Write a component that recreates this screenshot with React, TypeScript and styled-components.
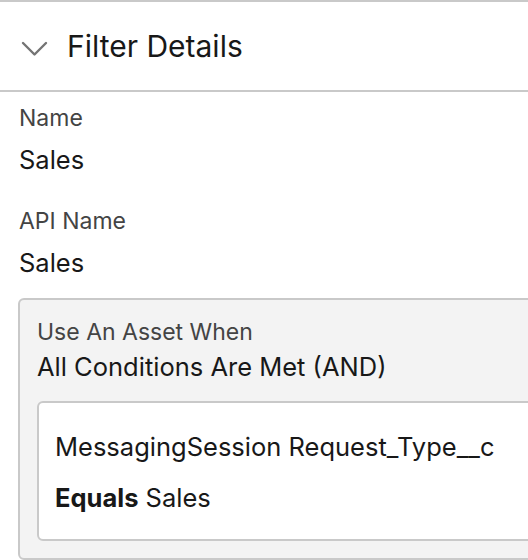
import styled, { createGlobalStyle } from 'styled-components';

const GlobalStyle = createGlobalStyle`
    body {
        margin: 0;
        background: #ffffff;
        overflow: hidden;
        font-family: Inter, "Noto Sans", "Liberation Sans", sans-serif;
        color: #181818;
    }
`;

const Page = styled.div`
    width: 600px;
`;

const Header = styled.div`
    height: 88px;
    display: flex;
    align-items: center;
    gap: 19px;
    padding-left: 21px;
    border-top: 2px solid #c9c9c9;
    border-bottom: 2px solid #c9c9c9;
`;

const Chevron = styled.svg`
    width: 27px;
    height: 16px;
    margin-top: 6px;
    flex: none;
`;

const Title = styled.h2`
    margin: 0;
    font-size: 30px;
    font-weight: 400;
    color: #181818;
`;

const Content = styled.div`
    padding: 11px 0 0 18px;
`;

const Field = styled.div<{ $gap?: number }>`
    padding-left: 1px;
    margin-bottom: ${p => p.$gap ?? 0}px;
`;

const Label = styled.div`
    font-size: 23px;
    line-height: 30px;
    color: #444444;
`;

const Value = styled.div<{ $top?: number }>`
    font-size: 25.5px;
    line-height: 32px;
    margin-top: ${p => p.$top ?? 0}px;
    color: #181818;
`;

const Outer = styled.div`
    margin-top: 19px;
    background: #f3f3f3;
    border: 2px solid #c9c9c9;
    border-radius: 6px;
    padding: 17px 0 17px 17px;
`;

const Inner = styled.div`
    margin-top: 18px;
    background: #ffffff;
    border: 2px solid #c9c9c9;
    border-radius: 6px;
    padding: 28px 0 25px 16px;
`;

const Strong = styled.b`
    font-weight: 700;
`;

export default function App() {
    return (
        <Page>
            <GlobalStyle />
            <Header>
                <Chevron viewBox="0 0 27 16">
                    <polyline points="2,2 13.5,13.5 25,2" fill="none" stroke="#747474" strokeWidth="2.4" strokeLinecap="round" strokeLinejoin="round" />
                </Chevron>
                <Title>Filter Details</Title>
            </Header>
            <Content>
                <Field $gap={30}>
                    <Label>Name</Label>
                    <Value $top={11}>Sales</Value>
                </Field>
                <Field>
                    <Label>API Name</Label>
                    <Value $top={11}>Sales</Value>
                </Field>
                <Outer>
                    <Label>Use An Asset When</Label>
                    <Value $top={4}>All Conditions Are Met (AND)</Value>
                    <Inner>
                        <Value>MessagingSession Request_Type__c</Value>
                        <Value $top={19}><Strong>Equals</Strong> Sales</Value>
                    </Inner>
                </Outer>
            </Content>
        </Page>
    );
}
